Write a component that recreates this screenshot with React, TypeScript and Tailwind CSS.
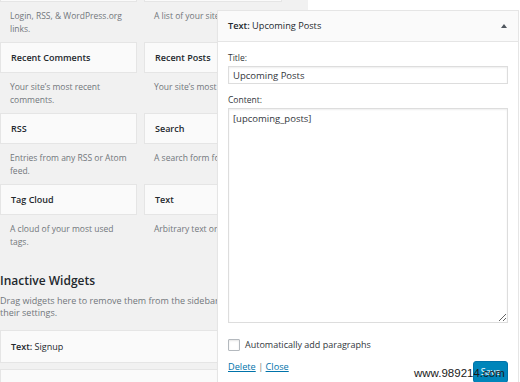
import React from "react";

type W = { title: string; desc: React.ReactNode };

const col1: W[] = [
  { title: "Meta", desc: <>Login, RSS, &amp; WordPress.org<br />links.</> },
  { title: "Recent Comments", desc: <>Your site’s most recent<br />comments.</> },
  { title: "RSS", desc: <>Entries from any RSS or Atom<br />feed.</> },
  { title: "Tag Cloud", desc: <>A cloud of your most used<br />tags.</> },
];
const col2: W[] = [
  { title: "Pages", desc: <>A list of your site’s Pages.</> },
  { title: "Recent Posts", desc: <>Your site’s most recent Posts.</> },
  { title: "Search", desc: <>A search form for your site.</> },
  { title: "Text", desc: <>Arbitrary text or HTML.</> },
];

function Widget({ w }: { w: W }) {
  return (
    <div>
      <div className="h-[31px] border border-[#e5e5e5] bg-[#fafafa] px-[10px] flex items-center text-[9px] font-semibold text-[#23282d] whitespace-nowrap overflow-hidden">
        {w.title}
      </div>
      <div className="h-[40px] px-[10px] pt-[7px] text-[8.5px] leading-[13px] text-[#72777c] whitespace-nowrap">
        {w.desc}
      </div>
    </div>
  );
}

export default function App() {
  return (
    <div className="relative w-[520px] h-[382px] overflow-hidden bg-white font-['Open_Sans',sans-serif]">
      <div className="flex h-full">
        <div className="w-[308px] h-full shrink-0 bg-[#f1f1f1]">
          <div className="-mt-[29px] grid grid-cols-[137px_138px] gap-x-[7px]">
            <div>
              {col1.map((w) => (
                <Widget key={w.title} w={w} />
              ))}
            </div>
            <div>
              {col2.map((w) => (
                <Widget key={w.title} w={w} />
              ))}
            </div>
          </div>
          <div className="mt-[18px] text-[12px] leading-[16px] font-semibold text-[#23282d]">
            Inactive Widgets
          </div>
          <div className="mt-[6px] text-[9px] leading-[12px] text-[#72777c] whitespace-nowrap">
            Drag widgets here to remove them from the sidebar but keep
            <br />
            their settings.
          </div>
          <div className="mt-[11px] h-[33px] border border-[#e5e5e5] bg-[#fafafa] px-[10px] flex items-center text-[9px] text-[#23282d] whitespace-nowrap">
            <span className="font-semibold">Text:</span>
            <span>&nbsp;Signup</span>
          </div>
          <div className="mt-[6px] h-[33px] border border-[#e5e5e5] bg-[#fafafa] px-[10px] flex items-center text-[9px] font-semibold text-[#23282d]">
            Search
          </div>
        </div>
        <div className="flex-1 bg-white" />
      </div>

      <div className="absolute left-[217px] top-[10px] w-[302px] h-[400px] border border-[#e5e5e5] bg-white shadow-[0_1px_1px_rgba(0,0,0,0.04)]">
        <div className="h-[31px] bg-[#fafafa] border-b border-[#e5e5e5] flex items-center justify-between pl-[10px] pr-[11px]">
          <div className="text-[9.2px] text-[#23282d] whitespace-nowrap">
            <span className="font-semibold">Text:</span>
            <span> Upcoming Posts</span>
          </div>
          <svg width="6" height="4" viewBox="0 0 6 4">
            <polygon points="3,0 6,4 0,4" fill="#50575e" />
          </svg>
        </div>
        <div className="px-[10px] pt-[10px]">
          <div className="text-[8.5px] leading-[12px] text-[#32373c]">Title:</div>
          <input
            readOnly
            defaultValue="Upcoming Posts"
            className="mt-[2px] block w-[280px] h-[18px] border border-[#ddd] bg-white px-[4px] text-[9.5px] text-[#32373c] shadow-[inset_0_1px_2px_rgba(0,0,0,0.07)] outline-none font-['Open_Sans',sans-serif]"
          />
          <div className="mt-[10px] text-[8.5px] leading-[12px] text-[#32373c]">Content:</div>
          <textarea
            readOnly
            defaultValue="[upcoming_posts]"
            className="mt-[2px] block w-[280px] h-[215px] border border-[#ddd] bg-white px-[4px] pt-[3px] text-[9.5px] leading-[13px] text-[#32373c] shadow-[inset_0_1px_2px_rgba(0,0,0,0.07)] outline-none resize font-['Open_Sans',sans-serif]"
          />
          <div className="mt-[16px] flex items-center h-[12px]">
            <span className="block w-[12px] h-[12px] border border-[#b4b9be] bg-white rounded-[1px] shadow-[inset_0_1px_2px_rgba(0,0,0,0.1)]" />
            <span className="ml-[5px] text-[9px] leading-[12px] text-[#32373c] whitespace-nowrap">
              Automatically add paragraphs
            </span>
          </div>
          <div className="mt-[10px] flex items-start">
            <div className="text-[9.2px] leading-[12px] whitespace-nowrap">
              <span className="text-[#0073aa] underline">Delete</span>
              <span className="text-[#72777c]"> | </span>
              <span className="text-[#0073aa] underline">Close</span>
            </div>
            <div className="ml-auto w-[35px] h-[22px] rounded-[3px] bg-[#0085ba] border border-[#0073aa] flex items-center justify-center text-[9px] text-white">
              Save
            </div>
          </div>
        </div>
      </div>

      <div className="absolute left-[414px] top-[366px] text-[11.5px] leading-[14px] text-[#1a1a1a] font-['Liberation_Sans',sans-serif] whitespace-nowrap">
        www.989214.com
      </div>
    </div>
  );
}
